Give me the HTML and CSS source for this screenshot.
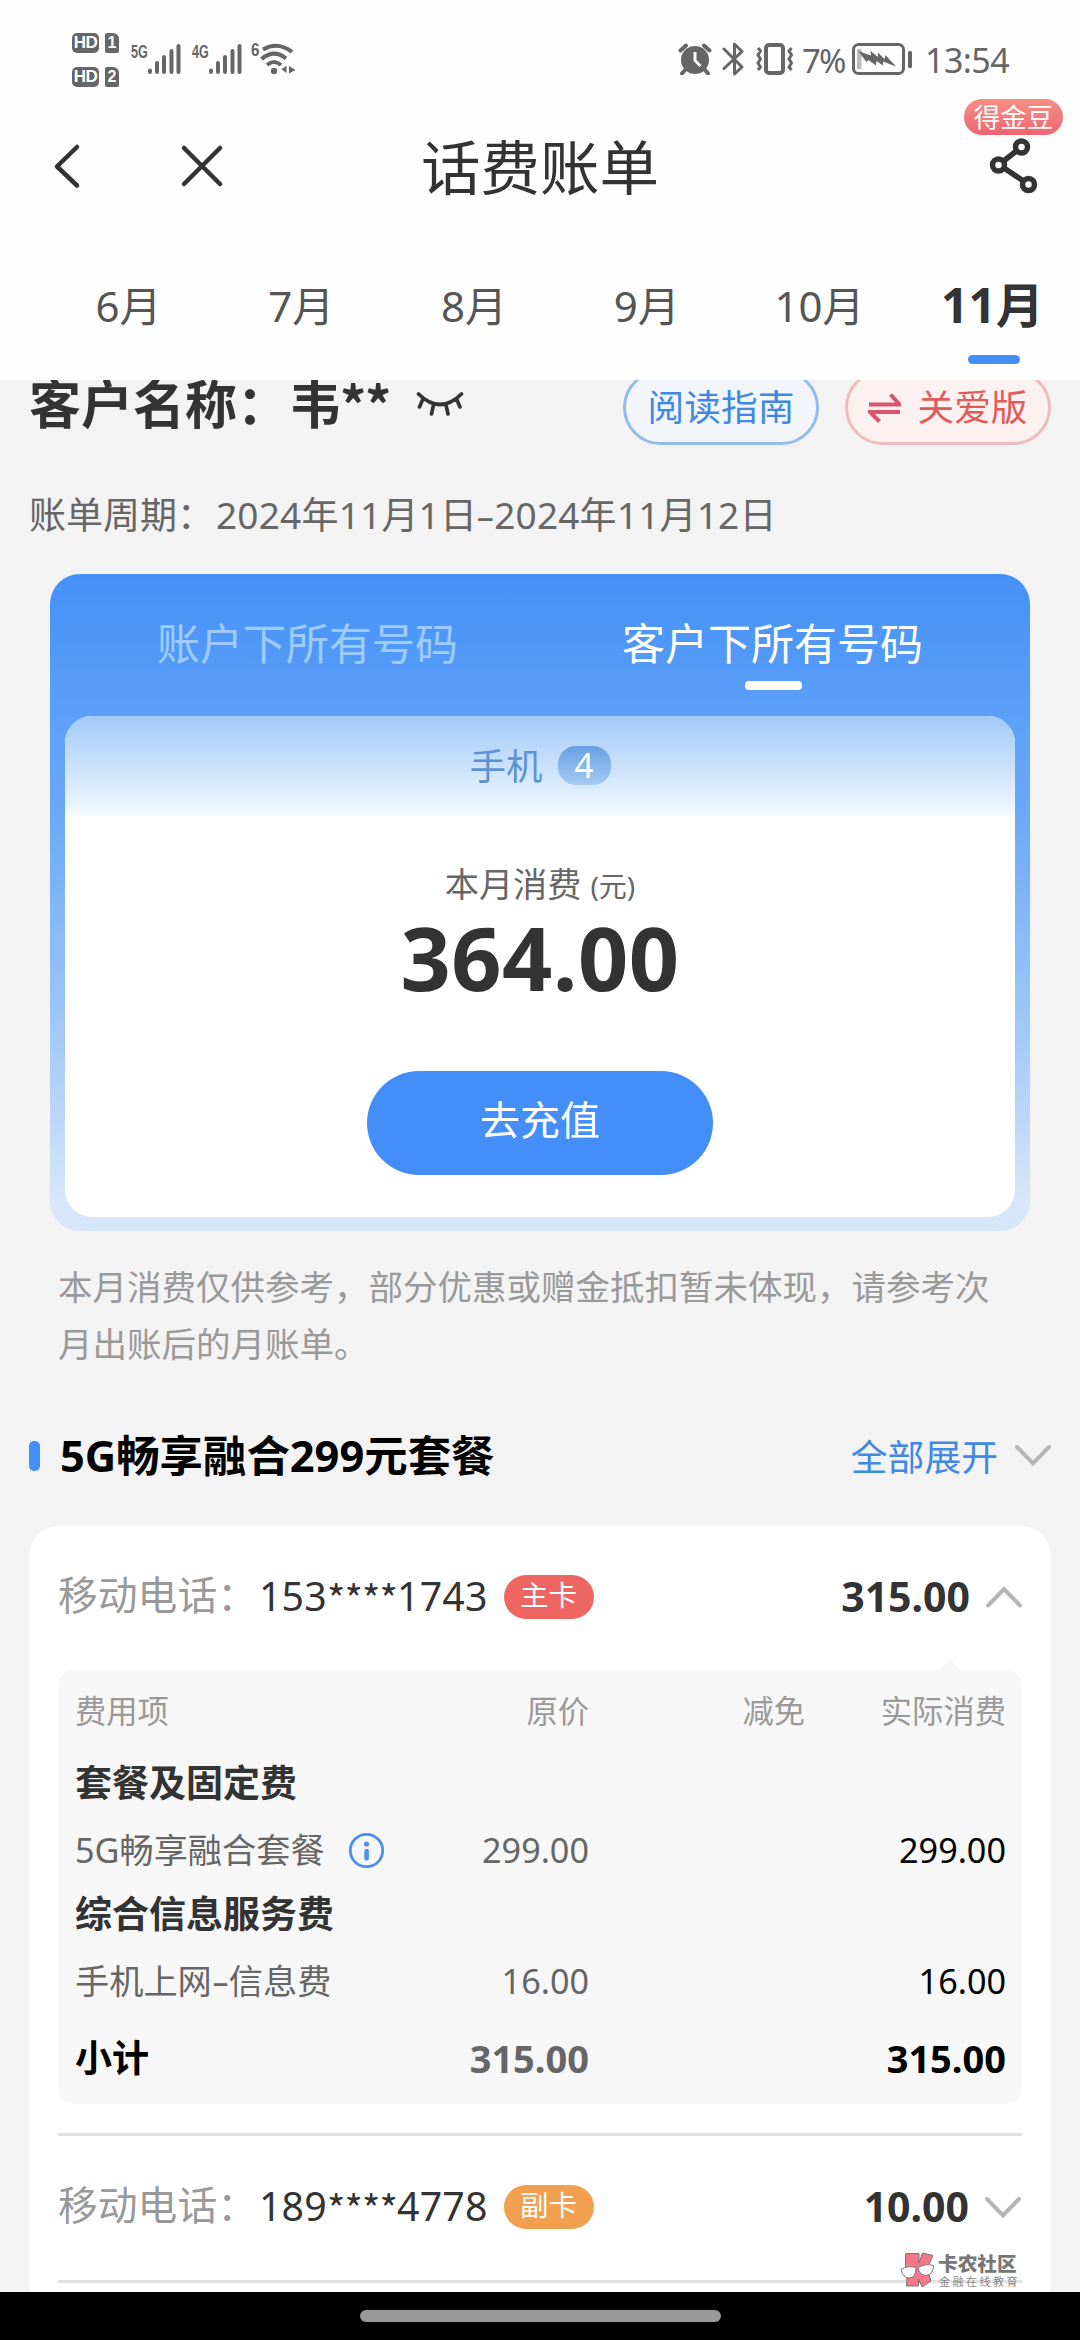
FILE: index.html
```html
<!DOCTYPE html>
<html lang="zh-CN">
<head>
<meta charset="utf-8">
<title>话费账单</title>
<link rel="stylesheet" href="styles.css">
</head>
<body>
<header class="top">
  <div class="status">
    <div class="status-left">
      <div class="hd-group">
        <div class="hd-row"><span class="hd">HD</span><span class="sim">1</span></div>
        <div class="hd-row"><span class="hd">HD</span><span class="sim">2</span></div>
      </div>
      <div class="signal signal-5g"><span class="net">5G</span>
        <svg width="33" height="32" viewBox="0 0 33 32" fill="none" stroke="#666" stroke-width="4" stroke-linecap="round"><path d="M2 27.500V29M9 20V29M16 14V29M23.500 8V29M30.500 3V29"/></svg>
      </div>
      <div class="signal signal-4g"><span class="net">4G</span>
        <svg width="33" height="32" viewBox="0 0 33 32" fill="none" stroke="#666" stroke-width="4" stroke-linecap="round"><path d="M2 27.500V29M9 20V29M16 14V29M23.500 8V29M30.500 3V29"/></svg>
      </div>
      <div class="signal"><span class="net net-wifi">6</span>
        <svg class="wifi" width="36" height="32" viewBox="0 0 36 32" fill="none" stroke="#666" stroke-width="4"><path d="M3 6.500Q18-2 32 9M1.500 16Q14 5.500 26 15.500M7 22Q14 16 21 22"/><circle cx="14" cy="28" r="3.200" fill="#666" stroke="none"/><path d="M26.500 22.500V30L21.500 26.200ZM29 30.500V23L35.500 27Z" fill="#666" stroke="none"/></svg>
      </div>
    </div>
    <div class="status-right">
      <svg width="34" height="32" viewBox="0 0 34 32"><circle cx="17" cy="17" r="14" fill="#666"/><path d="M2.500 7.500L8 2.500M31.500 7.500L26 2.500M7 27L4 30.500M27 27L30 30.500" stroke="#666" stroke-width="4" stroke-linecap="round"/><path d="M17 9V17.500L22.500 23" fill="none" stroke="#fff" stroke-width="3"/></svg>
      <svg class="bt" width="22" height="34" viewBox="0 0 22 34" fill="none" stroke="#666" stroke-width="3" stroke-linejoin="round" stroke-linecap="round"><path d="M2 7L20 25L12.500 32V2L20 9.500L2 26.500"/></svg>
      <svg class="vib" width="40" height="32" viewBox="0 0 40 32" fill="none" stroke="#666"><rect x="11" y="2" width="17" height="28" rx="3" stroke-width="4"/><path d="M3 5L5.500 8L3 12L5.500 16L3 20L5.500 24L3 27M36.500 5L34 8L36.500 12L34 16L36.500 20L34 24L36.500 27" stroke-width="3"/></svg>
      <span class="pct">7%</span>
      <svg class="batt" width="61" height="33" viewBox="0 0 61 33"><rect x="1.500" y="1.500" width="50" height="29" rx="5" fill="none" stroke="#666" stroke-width="3"/><rect x="5" y="6" width="4.500" height="20" fill="#bbb"/><path d="M6 8L19 12.500L18.500 8L26 14L26 9.500L32.500 16L33.500 12L44 23.500L31 18.500L31 22.500L24.500 18L24 22.500L16.500 17L14.500 19Z" fill="#666"/><rect x="56" y="8" width="4" height="17" rx="1.500" fill="#666"/></svg>
      <span class="clock">13:54</span>
    </div>
  </div>
  <nav class="navbar">
    <svg class="back" width="30" height="48" viewBox="0 0 30 48" fill="none" stroke="#333" stroke-width="4.500" stroke-linecap="round" stroke-linejoin="round"><path d="M24 5L4 24.500L24 43.500"/></svg>
    <svg class="close" width="46" height="46" viewBox="0 0 46 46" fill="none" stroke="#333" stroke-width="4.500" stroke-linecap="round"><path d="M5 5L41 41M41 5L5 41"/></svg>
    <h1 class="title">话费账单</h1>
    <div class="share">
      <span class="bean">得金豆</span>
      <svg class="share-icon" width="50" height="58" viewBox="0 0 50 58" fill="none" stroke="#333" stroke-width="5.500"><circle cx="32.500" cy="10" r="6"/><circle cx="9.500" cy="28" r="6"/><circle cx="39.500" cy="47.500" r="6"/><path d="M28 13.500L14 24.500M15 31L34.500 44"/></svg>
    </div>
  </nav>
  <div class="months">
    <span>6月</span><span>7月</span><span>8月</span><span>9月</span><span>10月</span><span class="active">11月</span>
  </div>
</header>

<main class="content">
  <div class="customer">
    <span class="cname">客户名称：韦<span class="mask">**</span></span>
    <svg class="eye" width="48" height="26" viewBox="0 0 48 26" fill="none" stroke="#333" stroke-width="3.600" stroke-linecap="round"><path d="M2.500 3Q24 24 45.500 3M6.500 9L3.500 16M17.500 14L15.500 23M30 14L32 23M41 9L44 16"/></svg>
    <span class="pill pill-blue">阅读指南</span>
    <span class="pill pill-red"><svg width="33" height="30" viewBox="0 0 33 30" fill="none" stroke="#d9556c" stroke-width="4"><path d="M1 11.500H31.500L22.500 1.500M32 19H2L11.500 28.500"/></svg>关爱版</span>
  </div>
  <p class="cycle">账单周期：<span class="dates">2024年11月1日<span class="dash">-</span>2024年11月12日</span></p>

  <section class="summary">
    <div class="scope"><span>账户下所有号码</span><span class="on">客户下所有号码</span></div>
    <div class="panel">
      <div class="kind">手机<span class="count">4</span></div>
      <div class="label">本月消费<small>(元)</small></div>
      <div class="amount">364.00</div>
      <div class="pay">去充值</div>
    </div>
  </section>
  <p class="note">本月消费仅供参考，部分优惠或赠金抵扣暂未体现，请参考次月出账后的月账单。</p>

  <div class="plan">
    <h2>5G畅享融合299元套餐</h2>
    <span class="expand">全部展开</span>
    <svg width="38" height="24" viewBox="0 0 38 24" fill="none" stroke="#b5b5b5" stroke-width="4" stroke-linecap="round"><path d="M3 3L19 19.500L35 3"/></svg>
  </div>

  <section class="lines">
    <div class="line">
      <span class="k">移动电话：</span><span class="num">153<span class="mask">****</span>1743</span><span class="tag main-card">主卡</span>
      <span class="sum">315.00</span>
      <svg width="38" height="24" viewBox="0 0 38 24" fill="none" stroke="#b5b5b5" stroke-width="4" stroke-linecap="round"><path d="M3 20.500L19 4L35 20.500"/></svg>
    </div>
    <div class="detail">
      <div class="row head"><span>费用项</span><span>原价</span><span>减免</span><span>实际消费</span></div>
      <div class="group g1">套餐及固定费</div>
      <div class="row r1"><span>5G畅享融合套餐<svg class="info" width="37" height="37" viewBox="0 0 37 37"><circle cx="18.500" cy="18.500" r="16.200" fill="none" stroke="#4a90ea" stroke-width="2.800"/><circle cx="18.500" cy="12" r="2.600" fill="#4a90ea"/><rect x="16.300" y="17" width="4.600" height="11.500" rx="2" fill="#4a90ea"/></svg></span><span>299.00</span><span></span><span>299.00</span></div>
      <div class="group g2">综合信息服务费</div>
      <div class="row r2"><span>手机上网<span class="dash">-</span>信息费</span><span>16.00</span><span></span><span>16.00</span></div>
      <div class="row total"><span>小计</span><span>315.00</span><span></span><span>315.00</span></div>
    </div>
    <div class="line second">
      <span class="k">移动电话：</span><span class="num">189<span class="mask">****</span>4778</span><span class="tag sub-card">副卡</span>
      <span class="sum">10.00</span>
      <svg width="38" height="24" viewBox="0 0 38 24" fill="none" stroke="#b5b5b5" stroke-width="4" stroke-linecap="round"><path d="M3 4L19 20.500L35 4"/></svg>
    </div>
  </section>
</main>

<footer class="homebar"><span></span></footer>

<div class="watermark">
  <svg width="35" height="36" viewBox="0 0 35 36"><path d="M5.500 1.500H19L19 11L22.500 1L33 3.500L27 16.500L31 29L22 35L18.500 27V34H6.500L7 22L5.500 14Z" fill="#f4788a" stroke="#777" stroke-width="1"/><path d="M1 17.500Q8 13 16 15.500Q16 26 9 26Q3 26 1 17.500ZM18 15.500Q26 11 33.500 13.500Q33 23 26 23.500Q19 23 18 15.500Z" fill="#fff" stroke="#777" stroke-width="1"/></svg>
  <div class="wm-text"><b>卡农社区</b><span>金融在线教育</span></div>
</div>
</body>
</html>
```

FILE: styles.css
```css
* { box-sizing: border-box; }

body {
  margin: 0;
  position: relative;
  width: 1080px;
  height: 2340px;
  overflow: hidden;
  display: flex;
  flex-direction: column;
  background: #f3f3f3;
  color: #333;
  font-family: "Noto Sans", "Noto Sans CJK SC", sans-serif;
}

h1, h2, p { margin: 0; }
svg { display: block; flex: none; }
span { white-space: nowrap; }
.mask { font-family: "Noto Sans CJK SC", sans-serif; line-height: 0; vertical-align: -3px; }

/* header */
.top { height: 380px; background: #fefefe; flex: none; position: relative; z-index: 1; }

.status {
  height: 100px;
  padding: 33px 71px 0 72px;
  display: flex;
  justify-content: space-between;
  color: #666;
}
.status-left { display: flex; }
.hd-group { display: flex; flex-direction: column; gap: 14px; width: 59px; }
.hd-row { display: flex; gap: 6px; height: 20px; }
.hd, .sim {
  background: #666;
  color: #fff;
  font: bold 17px/20px "Liberation Sans", sans-serif;
  text-align: center;
  border-radius: 5px;
}
.hd { width: 27px; letter-spacing: -0.5px; }
.sim { width: 14px; border-radius: 2px 6px 2px 2px; font-size: 16px; }
.signal { display: flex; padding-top: 10px; }
.signal-5g { width: 61px; }
.signal-4g { width: 59px; }
.net {
  font: bold 19px/18px "Liberation Sans", sans-serif;
  width: 17px;
  transform: scaleX(0.66);
  transform-origin: left;
}
.net-wifi { width: 9px; transform: scaleX(0.8); margin-top: -2px; }

.status-right { display: flex; padding-top: 10px; }
.bt { margin: -1px 0 0 10px; }
.vib { margin-left: 11px; }
.pct { font-size: 33px; line-height: 34px; letter-spacing: -1.9px; margin: 1px 0 0 7px; width: 50px; }
.batt { width: 61px; }
.clock { font-size: 34px; line-height: 34px; letter-spacing: -0.6px; margin: 0 0 0 12px; }

.navbar { height: 140px; position: relative; display: flex; align-items: flex-start; }
.back { margin: 42px 0 0 53px; }
.close { margin: 42.500px 0 0 96px; }
.title {
  margin: 27px 0 0 196px;
  font-size: 59.500px;
  line-height: 80px;
  font-weight: 400;
}
.share { margin-left: auto; margin-right: 17px; width: 99px; }
.bean {
  display: block;
  margin-top: -1px;
  height: 36px;
  border-radius: 18px;
  background: linear-gradient(#f68f84, #ee6573);
  color: #fff;
  font-size: 26.500px;
  line-height: 36px;
  text-align: center;
}
.share-icon { margin: 2px 0 0 25px; }

.months { display: flex; margin-left: 42px; height: 140px; }
.months span {
  width: 172.800px;
  flex: none;
  text-align: center;
  font-size: 42px;
  line-height: 131px;
  color: #555;
  position: relative;
}
.months .active { font-size: 48px; font-weight: 700; color: #333; line-height: 130px; }
.months .active::after {
  content: "";
  position: absolute;
  left: 62px;
  top: 115px;
  width: 52px;
  height: 9px;
  border-radius: 5px;
  background: #448ef7;
}

/* scrolled content */
.content { height: 1912px; overflow: hidden; flex: none; }

.customer { display: flex; align-items: center; margin-top: -10px; height: 75px; padding: 0 29px; }
.cname { font-size: 52px; line-height: 72px; font-weight: 700; margin-top: -8px; }
.cname .mask { letter-spacing: -1.5px; margin-left: -1px; vertical-align: -1px; }
.eye { margin-left: 26px; margin-top: -8px; }
.pill {
  height: 75px;
  border: 3px solid;
  border-radius: 38px;
  font-size: 36.700px;
  line-height: 69px;
  display: flex;
  align-items: center;
  justify-content: center;
}
.pill-blue { width: 196px; margin-left: auto; color: #4088e2; border-color: #93bbeb; background: #f2f6fb; }
.pill-red { width: 206px; margin-left: 26px; color: #e05c5a; border-color: #efbcbc; background: #fbf1f1; gap: 16px; }

.cycle { margin-top: 35px; padding-left: 29px; font-size: 37px; line-height: 70px; color: #666; }
.dates { letter-spacing: 0.2px; margin-left: 2px; }
.dash { display: inline-block; width: 17px; text-align: center; transform: scaleX(1.6); }

.summary {
  margin: 24px 50px 0;
  height: 657px;
  padding: 0 15px;
  border-radius: 30px;
  background: linear-gradient(#4590f7 0%, #5ba0f8 21%, #69a8f6 35%, #94c1f5 62%, #b9d6f8 82%, #d7e6f9 95%, #d7e6f9 100%);
}
.scope { height: 142px; display: flex; padding: 0 10px; }
.scope span {
  flex: 1;
  text-align: center;
  font-size: 43px;
  line-height: 139px;
  color: #9dccfc;
  position: relative;
}
.scope .on { color: #fff; }
.scope .on::after {
  content: "";
  position: absolute;
  left: calc(50% - 28px);
  top: 107px;
  width: 57px;
  height: 9px;
  border-radius: 4px;
  background: #fff;
}
.panel {
  height: 501px;
  border-radius: 27px;
  overflow: hidden;
  background: #fff;
  display: flex;
  flex-direction: column;
  align-items: center;
}
.kind {
  align-self: stretch;
  height: 100px;
  display: flex;
  justify-content: center;
  align-items: center;
  gap: 15px;
  font-size: 36.500px;
  line-height: 96px;
  padding-bottom: 1px;
  color: #5c93d0;
  background: linear-gradient(#a0caf8, #f4f9fe);
}
.count {
  width: 53px;
  height: 39px;
  border-radius: 18px;
  color: #fff;
  font-size: 34px;
  line-height: 39px;
  text-align: center;
  background: linear-gradient(#689fe2, #a6cbf4);
}
.label { margin-top: 43px; font-size: 34.200px; line-height: 50px; color: #666; }
.label small { font-size: 28px; margin-left: 9px; }
.amount { margin-top: -4px; font-size: 88px; font-weight: 700; line-height: 100px; letter-spacing: 0.4px; }
.pay {
  margin-top: 64px;
  width: 346px;
  height: 104px;
  border-radius: 52px;
  background: #448ef7;
  color: #fff;
  font-size: 40px;
  line-height: 98px;
  text-align: center;
}

.note { margin: 27px 70px 0 58px; font-size: 34.500px; line-height: 57px; color: #999; }

.plan { margin-top: 46px; height: 76px; display: flex; align-items: center; padding: 0 28px 0 29px; }
.plan::before { content: ""; width: 11px; height: 30px; border-radius: 5px; background: #448ef7; }
.plan h2 { margin-left: 20px; font-size: 43.400px; line-height: 76px; font-weight: 700; color: #000; }
.expand { margin-left: auto; margin-right: 16px; margin-top: -3px; font-size: 36.800px; color: #4088e2; }

.lines {
  margin: 32px 29px 0;
  height: 800px;
  padding: 0 29px;
  background: #fff;
  border-radius: 30px;
}
.line { display: flex; align-items: center; height: 144px; margin-right: -1px; padding-bottom: 2px; }
.line.second { height: 150px; margin-top: 29px; border-top: 3px solid #e2e2e2; border-bottom: 3px solid #e2e2e2; margin-right: 0; }
.k { font-size: 39.800px; line-height: 50px; margin-top: -4px; color: #999; }
.num { font-size: 39.300px; line-height: 50px; margin: -3px 0 0 2px; color: #333; letter-spacing: 0.15px; }
.num .mask { letter-spacing: -0.8px; }
.tag {
  margin-left: 16px;
  width: 90px;
  height: 44px;
  border-radius: 22px;
  color: #fff;
  font-size: 28.500px;
  line-height: 41px;
  text-align: center;
}
.main-card { background: #ed6662; }
.sub-card { background: #f1a04f; }
.sum { margin-left: auto; margin-right: 15px; margin-top: -2px; font-size: 41px; line-height: 50px; font-weight: 700; }

.detail {
  position: relative;
  height: 434px;
  padding: 6px 16px 0 17px;
  border-radius: 15px;
  background: #f7f7f7;
}
.detail::before {
  content: "";
  position: absolute;
  left: 881px;
  top: -11px;
  border: 11px solid transparent;
  border-top: 0;
  border-bottom-color: #f7f7f7;
}
.row {
  display: grid;
  grid-template-columns: 300px 214px 216px 201px;
  height: 66px;
  line-height: 66px;
  font-size: 34.200px;
  color: #666;
}
.row > span { text-align: right; }
.row > span:first-child { text-align: left; display: flex; align-items: center; }
.row > span:last-child { color: #000; }
.row.head { height: 70px; line-height: 70px; font-size: 31.300px; }
.row.head > span, .row.head > span:last-child { color: #999; }
.group { font-size: 37px; font-weight: 700; }
.g1 { height: 74px; line-height: 74px; }
.g2 { height: 68px; line-height: 68px; }
.row.r1 { height: 60px; line-height: 60px; }
.row.total { height: 90px; line-height: 88px; font-size: 38px; font-weight: 700; }
.row.total > span:first-child { color: #000; font-size: 37px; height: 88px; }
.info { margin-left: 23px; }

.homebar { height: 48px; background: #000; display: flex; justify-content: center; align-items: center; flex: none; }
.homebar span { width: 361px; height: 12px; border-radius: 6px; background: #999; }

/* community mark laid over the page */
.watermark { position: absolute; left: 900px; top: 2252px; display: flex; gap: 3px; color: #777; }
.wm-text { display: flex; flex-direction: column; }
.wm-text b { font-size: 19.700px; line-height: 24px; font-weight: 900; }
.wm-text span { font-size: 11px; line-height: 12px; letter-spacing: 2.500px; margin-left: 1px; color: #888; }
```
